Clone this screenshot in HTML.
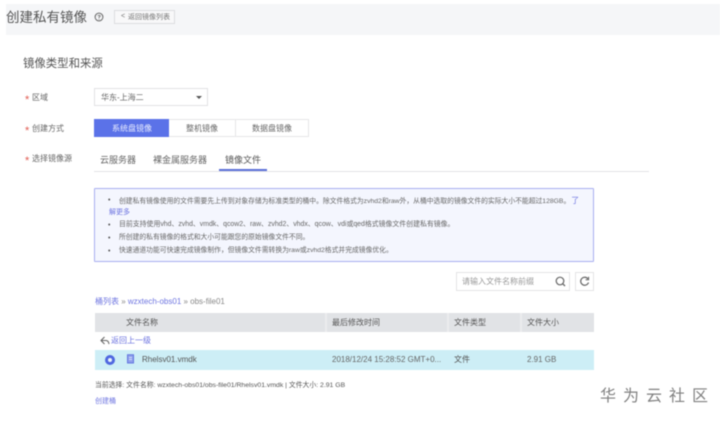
<!DOCTYPE html>
<html><head><meta charset="utf-8">
<style>
html,body{margin:0;padding:0;background:#fff}
body{width:720px;height:421px;position:relative;overflow:hidden;font-family:"Liberation Sans","Noto Sans CJK SC",sans-serif;color:#555}
#w{position:absolute;left:0;top:0;width:720px;height:421px;filter:blur(.55px)}
.a{position:absolute;white-space:nowrap;line-height:1}
.b{position:absolute;box-sizing:border-box}
.l{color:#6d74e0}
.s{color:#e0584e;font-size:11px}
</style></head><body>
<div id="w">
<div class="b" style="left:6px;top:4px;width:714px;height:31px;background:#f5f6f8"></div>
<div class="a" style="left:6px;top:11px;font-size:13.5px;color:#555">创建私有镜像</div>
<svg class="b" style="left:94px;top:12px" width="10" height="10" viewBox="0 0 10 10"><circle cx="5" cy="5" r="3.9" fill="none" stroke="#666" stroke-width="1"/><path d="M3.8 4Q5 2.6 6.2 3.8Q6.2 4.8 5 5.2V6M5 6.8V7.5" fill="none" stroke="#666" stroke-width=".8"/></svg>
<div class="b" style="left:114px;top:10px;width:61px;height:14px;border:1px solid #dcdde0;background:#f8f8f9"></div>
<div class="a" style="left:121px;top:13px;font-size:7px;color:#777">&lt;</div>
<div class="a" style="left:128px;top:13.5px;font-size:7px;color:#777">返回镜像列表</div>

<div class="a" style="left:23px;top:59px;font-size:11.4px;color:#555">镜像类型和来源</div>

<div class="a s" style="left:25px;top:95px">*</div>
<div class="a" style="left:32px;top:94px;font-size:8px;color:#666">区域</div>
<div class="b" style="left:94px;top:88px;width:114px;height:18px;border:1px solid #e2e2e4;background:#fff"></div>
<div class="a" style="left:101px;top:94px;font-size:8px;color:#666">华东-上海二</div>
<div class="b" style="left:196px;top:96px;width:0;height:0;border-left:3px solid transparent;border-right:3px solid transparent;border-top:3px solid #555"></div>

<div class="a s" style="left:25px;top:126px">*</div>
<div class="a" style="left:32px;top:125px;font-size:8px;color:#666">创建方式</div>
<div class="b" style="left:94px;top:119px;width:75px;height:18px;background:#5b72e8"></div>
<div class="a" style="left:112px;top:125px;font-size:8px;color:#e8ecff">系统盘镜像</div>
<div class="b" style="left:169px;top:119px;width:140px;height:18px;border:1px solid #e6e6e8;border-left:0"></div>
<div class="b" style="left:235px;top:119px;width:1px;height:18px;background:#e6e6e8"></div>
<div class="a" style="left:186px;top:125px;font-size:8px;color:#666">整机镜像</div>
<div class="a" style="left:252px;top:125px;font-size:8px;color:#666">数据盘镜像</div>

<div class="a s" style="left:25px;top:156px">*</div>
<div class="a" style="left:32px;top:155px;font-size:8px;color:#666">选择镜像源</div>
<div class="a" style="left:100px;top:156px;font-size:9px;color:#666">云服务器</div>
<div class="a" style="left:153px;top:156px;font-size:9px;color:#666">裸金属服务器</div>
<div class="a" style="left:225px;top:156px;font-size:9px;color:#555">镜像文件</div>
<div class="b" style="left:94px;top:171px;width:555px;height:1px;background:#e3e3e6"></div>
<div class="b" style="left:219px;top:169px;width:48px;height:2px;background:#5b6fd8"></div>

<div class="b" style="left:94px;top:188px;width:500px;height:74px;background:#f4f6fe;border:1px solid #a9aff0;border-radius:1px"></div>
<div class="a" style="left:108px;top:197px;font-size:7px;color:#555">•</div>
<div class="a" style="left:119px;top:196.5px;font-size:6.8px;color:#666">创建私有镜像使用的文件需要先上传到对象存储为标准类型的桶中。除文件格式为zvhd2和raw外，从桶中选取的镜像文件的实际大小不能超过128GB。<span class="l" style="font-size:8px;margin-left:1px">了</span></div>
<div class="a l" style="left:109px;top:209px;font-size:7px">解更多</div>
<div class="a" style="left:108px;top:222px;font-size:7px;color:#555">•</div>
<div class="a" style="left:119px;top:222px;font-size:6.9px;color:#666;word-spacing:.5px">目前支持使用vhd、zvhd、vmdk、qcow2、raw、zvhd2、vhdx、qcow、vdi或qed格式镜像文件创建私有镜像。</div>
<div class="a" style="left:108px;top:235px;font-size:7px;color:#555">•</div>
<div class="a" style="left:119px;top:235px;font-size:6.8px;color:#666">所创建的私有镜像的格式和大小可能跟您的原始镜像文件不同。</div>
<div class="a" style="left:108px;top:248px;font-size:7px;color:#555">•</div>
<div class="a" style="left:119px;top:247.5px;font-size:6.8px;color:#666">快速通道功能可快速完成镜像制作，但镜像文件需转换为raw或zvhd2格式并完成镜像优化。</div>

<div class="b" style="left:456px;top:272px;width:114px;height:19px;border:1px solid #e4e4e6;background:#fff"></div>
<div class="a" style="left:462px;top:278px;font-size:8px;color:#999">请输入文件名称前缀</div>
<svg class="b" style="left:554px;top:275px" width="13" height="13" viewBox="0 0 13 13"><circle cx="6" cy="6" r="3.8" fill="none" stroke="#666" stroke-width="1.2"/><path d="M8.8 8.8L11 11" stroke="#666" stroke-width="1.3"/></svg>
<div class="b" style="left:575px;top:272px;width:19px;height:19px;border:1px solid #e4e4e6;background:#fff"></div>
<svg class="b" style="left:578px;top:275px" width="13" height="13" viewBox="0 0 13 13"><path d="M10 4A4 4 0 1 0 10.5 7.5" fill="none" stroke="#666" stroke-width="1.2"/><path d="M10.6 1.8V4.8H7.6" fill="none" stroke="#666" stroke-width="1"/></svg>

<div class="a" style="left:95px;top:298px;font-size:8px;color:#888"><span class="l">桶列表</span> » <span class="l">wzxtech-obs01</span> » obs-file01</div>

<div class="b" style="left:95px;top:313px;width:499px;height:19px;background:#e1e3e6"></div>
<div class="b" style="left:325px;top:313px;width:2px;height:19px;background:#ebecee"></div>
<div class="b" style="left:447px;top:313px;width:2px;height:19px;background:#ebecee"></div>
<div class="b" style="left:520px;top:313px;width:2px;height:19px;background:#ebecee"></div>
<div class="a" style="left:126px;top:319px;font-size:8px;color:#555">文件名称</div>
<div class="a" style="left:332px;top:319px;font-size:8px;color:#555">最后修改时间</div>
<div class="a" style="left:454px;top:319px;font-size:8px;color:#555">文件类型</div>
<div class="a" style="left:527px;top:319px;font-size:8px;color:#555">文件大小</div>

<svg class="b" style="left:100px;top:336px" width="10" height="9" viewBox="0 0 10 9"><path d="M4.5 1L1 4.5L4.5 8M1.5 4.5H6Q8.5 4.5 9 8" fill="none" stroke="#666" stroke-width="1.1"/></svg>
<div class="a l" style="left:111px;top:337px;font-size:8px">返回上一级</div>

<div class="b" style="left:95px;top:350px;width:499px;height:20px;background:#cdeef6"></div>
<div class="b" style="left:105px;top:355px;width:10px;height:10px;border-radius:50%;border:3px solid #4f67e0;background:#e8f4fb"></div>
<svg class="b" style="left:126px;top:354px" width="9" height="10" viewBox="0 0 9 10"><path d="M1.5 .8H7.5V9H1.5Z" fill="#8fa0ec" stroke="#6577e0" stroke-width="1"/><path d="M3 3.5H6M3 5.5H6" stroke="#e8f0ff" stroke-width=".7"/></svg>
<div class="a" style="left:142px;top:356px;font-size:8px;color:#555">Rhelsv01.vmdk</div>
<div class="a" style="left:332px;top:356px;font-size:8px;color:#666">2018/12/24 15:28:52 GMT+0...</div>
<div class="a" style="left:454px;top:356px;font-size:8px;color:#555">文件</div>
<div class="a" style="left:527px;top:356px;font-size:8px;color:#666">2.91 GB</div>

<div class="a" style="left:95px;top:382.5px;font-size:6.85px;color:#555">当前选择: 文件名称: wzxtech-obs01/obs-file01/Rhelsv01.vmdk | 文件大小: 2.91 GB</div>
<div class="a l" style="left:95px;top:397.5px;font-size:7px">创建桶</div>

<div class="a" style="left:600px;top:389px;font-size:16px;color:#808080;letter-spacing:7px">华为云社区</div>
</div>
</body></html>
